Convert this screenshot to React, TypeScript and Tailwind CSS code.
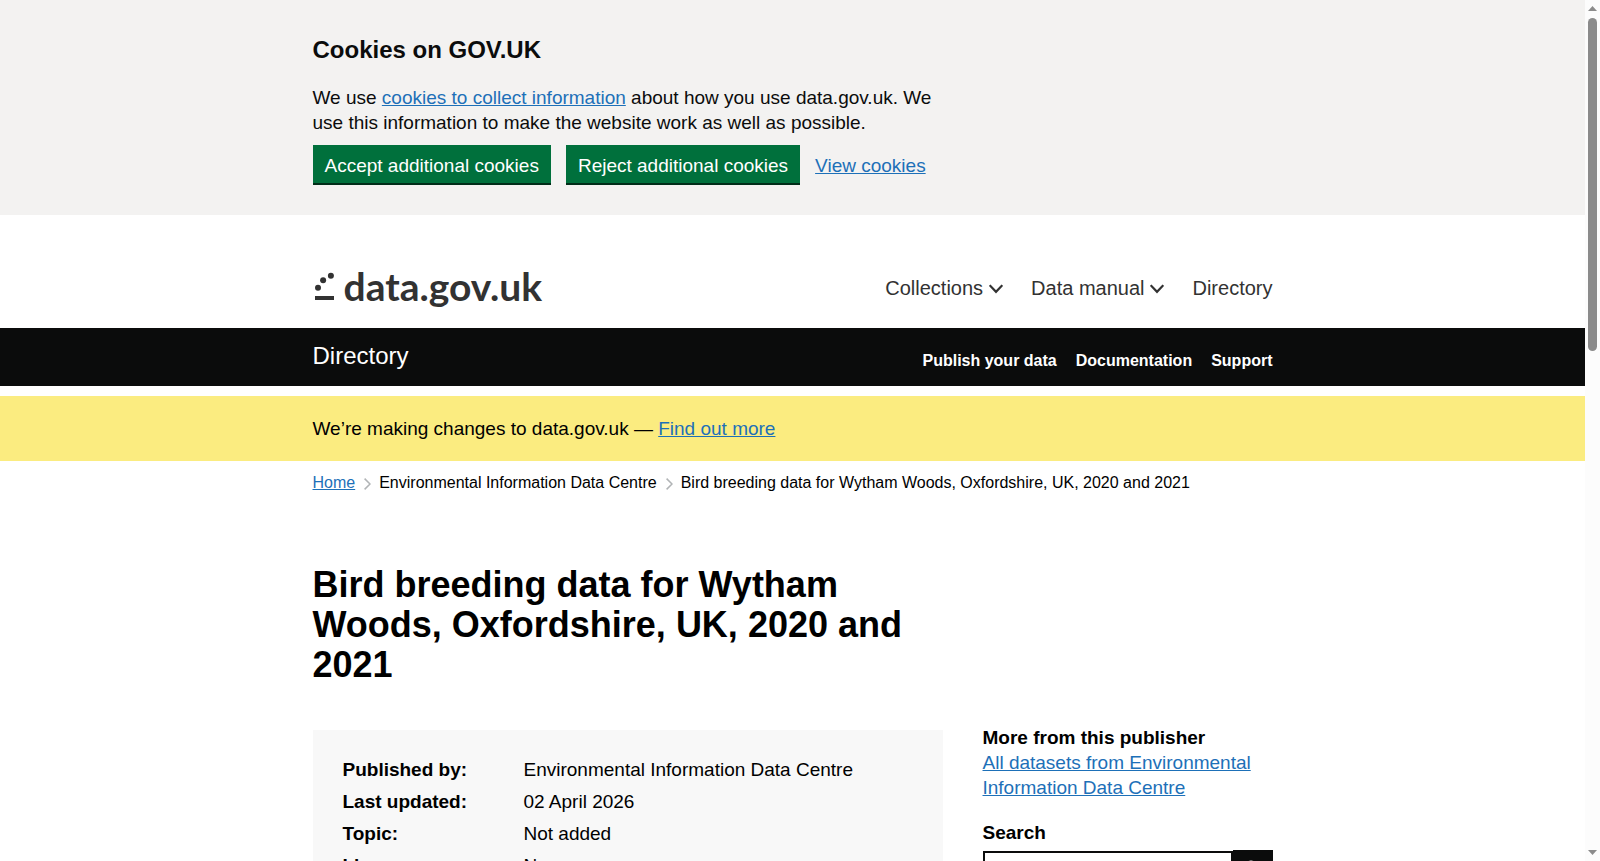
import type { ReactNode } from 'react';

const headerLinks = [
  { href: '#publish', label: 'Publish your data' },
  { href: '#documentation', label: 'Documentation' },
  { href: '#support', label: 'Support' },
];

const metadata = [
  { term: 'Published by:', value: 'Environmental Information Data Centre' },
  { term: 'Last updated:', value: '02 April 2026' },
  { term: 'Topic:', value: 'Not added' },
  { term: 'Licence:', value: 'None' },
];

function Container({ children, className = '' }: { children: ReactNode; className?: string }) {
  return <div className={`mx-auto w-full max-w-[960px] ${className}`}>{children}</div>;
}

function TextLink({ href, children }: { href: string; children: ReactNode }) {
  return (
    <a href={href} className="text-[#1d70b8] underline decoration-1 underline-offset-1 [text-decoration-skip-ink:none]">
      {children}
    </a>
  );
}

function ChevronDown() {
  return (
    <svg width="14" height="10" viewBox="0 0 14 10" fill="none" stroke="#323232" strokeWidth="2.2" className="mt-px" aria-hidden="true">
      <path d="M0.7 1.2 7 7.8 13.3 1.2" />
    </svg>
  );
}

function CrumbSeparator() {
  return (
    <svg width="7" height="12" viewBox="0 0 7 12" fill="none" stroke="#b1b4b6" strokeWidth="1.5" className="mt-px mr-2 ml-[9px]" aria-hidden="true">
      <path d="M0.6 0.6 6 6 0.6 11.4" />
    </svg>
  );
}

function CookieBanner() {
  return (
    <section aria-label="Cookies on GOV.UK" className="bg-[#f3f2f1] pt-[35px] pb-[30px] text-[#0b0c0c]">
      <Container>
        <div className="max-w-[630px]">
          <h2 className="mb-5 text-[24px] leading-[30px] font-bold">Cookies on GOV.UK</h2>
          <p>
            We use <TextLink href="#cookies">cookies to collect information</TextLink> about how you use data.gov.uk. We
            use this information to make the website work as well as possible.
          </p>
          <div className="mt-[10px] flex items-center gap-[15px]">
            <CookieButton>Accept additional cookies</CookieButton>
            <CookieButton>Reject additional cookies</CookieButton>
            <TextLink href="#view-cookies">View cookies</TextLink>
          </div>
        </div>
      </Container>
    </section>
  );
}

function CookieButton({ children }: { children: ReactNode }) {
  return (
    <button type="button" className="h-10 border-b-2 border-[#002d18] bg-[#00703c] px-3 pt-[2px] whitespace-nowrap text-white">
      {children}
    </button>
  );
}

function Logo() {
  return (
    <a href="#home" className="flex items-center text-[#323232]">
      <svg width="31" height="32" viewBox="0 0 31 32" fill="currentColor" aria-hidden="true">
        <circle cx="5" cy="17.7" r="3" />
        <circle cx="10.1" cy="10.2" r="3" />
        <circle cx="17.9" cy="5.8" r="3" />
        <rect x="2" y="26" width="19" height="4" />
      </svg>
      <span className="font-[Lato,sans-serif] text-[39px] leading-10 font-bold">data.gov.uk</span>
    </a>
  );
}

function Header() {
  return (
    <header>
      <Container className="flex items-end justify-between pt-[51px] pb-[22px]">
        <Logo />
        <nav aria-label="Main" className="flex items-center gap-7 pb-[6px] text-[20px] leading-6 text-[#323232]">
          <button type="button" className="flex items-center gap-[6px]">
            Collections
            <ChevronDown />
          </button>
          <button type="button" className="flex items-center gap-[6px]">
            Data manual
            <ChevronDown />
          </button>
          <a href="#directory">Directory</a>
        </nav>
      </Container>
      <div className="bg-[#0b0c0c] text-white">
        <Container className="flex items-end justify-between pt-[13px] pb-[15px]">
          <a href="#directory" className="text-[24px] leading-[30px]">Directory</a>
          <nav aria-label="Directory" className="flex gap-[19px] text-[16px] leading-5 font-bold">
            {headerLinks.map(({ href, label }) => (
              <a key={href} href={href}>{label}</a>
            ))}
          </nav>
        </Container>
      </div>
    </header>
  );
}

function Breadcrumbs() {
  return (
    <nav aria-label="Breadcrumb" className="pt-3 text-[16px] leading-5">
      <ol className="flex">
        <li>
          <TextLink href="#home">Home</TextLink>
        </li>
        <li className="flex items-center">
          <CrumbSeparator />
          Environmental Information Data Centre
        </li>
        <li className="flex items-center">
          <CrumbSeparator />
          Bird breeding data for Wytham Woods, Oxfordshire, UK, 2020 and 2021
        </li>
      </ol>
    </nav>
  );
}

function Sidebar() {
  return (
    <aside className="min-w-0 flex-1">
      <h2 className="font-bold">More from this publisher</h2>
      <TextLink href="#publisher">All datasets from Environmental Information Data Centre</TextLink>
      <form className="mt-5" onSubmit={(e) => e.preventDefault()}>
        <label htmlFor="search" className="mb-[5px] block font-bold">Search</label>
        <div className="flex">
          <input id="search" type="search" className="mt-px h-10 min-w-0 flex-1 appearance-none border-2 border-[#0b0c0c] bg-white px-2" />
          <button type="submit" aria-label="Search" className="flex h-10 w-10 shrink-0 items-center justify-center bg-[#0b0c0c] text-white">
            <svg width="20" height="20" viewBox="0 0 20 20" fill="none" stroke="currentColor" strokeWidth="2" aria-hidden="true">
              <circle cx="8" cy="8.6" r="7" />
              <path d="m13 13.6 5.4 5.4" />
            </svg>
          </button>
        </div>
      </form>
    </aside>
  );
}

function Scrollbar() {
  return (
    <div className="flex w-[15px] shrink-0 flex-col items-center bg-[#fcfcfc] py-[6px]" aria-hidden="true">
      <svg width="9" height="5" viewBox="0 0 9 5" fill="#8b8b8b">
        <path d="M0 5 4.5 0 9 5z" />
      </svg>
      <div className="mt-[7px] h-[333px] w-[9px] rounded-full bg-[#8b8b8b]" />
      <svg width="9" height="5" viewBox="0 0 9 5" fill="#8b8b8b" className="mt-auto">
        <path d="M0 0h9L4.5 5z" />
      </svg>
    </div>
  );
}

export default function App() {
  return (
    <div className="flex h-screen overflow-hidden bg-white font-['Liberation_Sans',Arial,sans-serif] text-[19px] leading-[25px] text-black">
      <div className="min-w-0 flex-1 overflow-hidden">
        <CookieBanner />
        <Header />
        <div className="mt-[10px] bg-[#fbec80] py-5">
          <Container>
            <p>
              We’re making changes to data.gov.uk — <TextLink href="#changes">Find out more</TextLink>
            </p>
          </Container>
        </div>
        <Container>
          <Breadcrumbs />
          <main className="pt-[72px]">
            <h1 className="max-w-[630px] text-[36px] leading-10 font-bold">
              Bird breeding data for Wytham Woods, Oxfordshire, UK, 2020 and 2021
            </h1>
            <div className="mt-10 flex gap-10">
              <dl className="mt-[5px] grid w-[630px] shrink-0 grid-cols-[181px_1fr] gap-y-[7px] bg-[#f8f8f8] px-[30px] py-[27px]">
                {metadata.map(({ term, value }) => (
                  <div key={term} className="contents">
                    <dt className="font-bold">{term}</dt>
                    <dd>{value}</dd>
                  </div>
                ))}
              </dl>
              <Sidebar />
            </div>
          </main>
        </Container>
      </div>
      <Scrollbar />
    </div>
  );
}
